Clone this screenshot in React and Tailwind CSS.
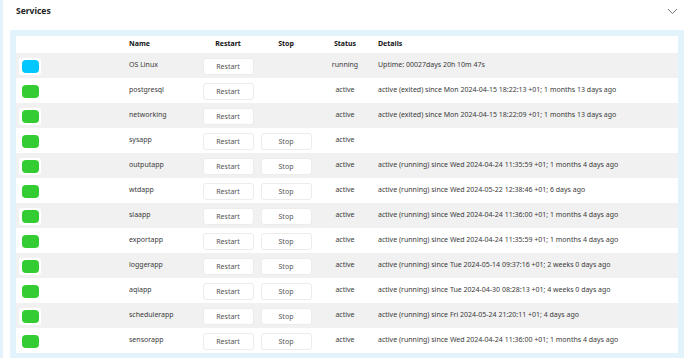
import React from "react";

const services = [
  { name: "OS Linux", color: "bg-[#00c8ff]", stop: false, status: "running", details: "Uptime: 00027days 20h 10m 47s" },
  { name: "postgresql", stop: false, status: "active", details: "active (exited) since Mon 2024-04-15 18:22:13 +01; 1 months 13 days ago" },
  { name: "networking", stop: false, status: "active", details: "active (exited) since Mon 2024-04-15 18:22:09 +01; 1 months 13 days ago" },
  { name: "sysapp", stop: true, status: "active", details: "" },
  { name: "outputapp", stop: true, status: "active", details: "active (running) since Wed 2024-04-24 11:35:59 +01; 1 months 4 days ago" },
  { name: "wtdapp", stop: true, status: "active", details: "active (running) since Wed 2024-05-22 12:38:46 +01; 6 days ago" },
  { name: "slaapp", stop: true, status: "active", details: "active (running) since Wed 2024-04-24 11:36:00 +01; 1 months 4 days ago" },
  { name: "exportapp", stop: true, status: "active", details: "active (running) since Wed 2024-04-24 11:35:59 +01; 1 months 4 days ago" },
  { name: "loggerapp", stop: true, status: "active", details: "active (running) since Tue 2024-05-14 09:37:16 +01; 2 weeks 0 days ago" },
  { name: "aqiapp", stop: true, status: "active", details: "active (running) since Tue 2024-04-30 08:28:13 +01; 4 weeks 0 days ago" },
  { name: "schedulerapp", stop: true, status: "active", details: "active (running) since Fri 2024-05-24 21:20:11 +01; 4 days ago" },
  { name: "sensorapp", stop: true, status: "active", details: "active (running) since Wed 2024-04-24 11:36:00 +01; 1 months 4 days ago" },
];

function SmallButton({ label }) {
  return (
    <button className="h-[17px] w-[51px] rounded-[3px] border border-[#ececec] bg-white text-[7px] leading-none text-[#555]">
      {label}
    </button>
  );
}

export default function App() {
  return (
    <div
      className="h-[358px] w-[688px] overflow-hidden border-l-[3px] border-[#e4f3fb] bg-white text-[#3a3a3a]"
      style={{ fontFamily: '"Noto Sans", "Open Sans", sans-serif' }}
    >
      {/* header */}
      <div className="flex h-[30px] items-start justify-between pl-[13px] pr-[10px] pt-[5px]">
        <span className="text-[8.5px] font-bold leading-[12px] text-[#222]">Services</span>
        <svg width="11" height="7" viewBox="0 0 11 7" className="mt-[3px]">
          <polyline points="1,1 5.5,5.5 10,1" fill="none" stroke="#777" strokeWidth="1" />
        </svg>
      </div>

      <div className="ml-[7px] mr-[4px] bg-[#e2f3fc] px-[6px] pt-[6px] pb-[5px]">
        <div className="bg-white">
          {/* column headings */}
          <div className="flex h-[17px] items-center text-[7px] font-bold text-[#111]">
            <div className="w-[113px]" />
            <div className="w-[71px]">Name</div>
            <div className="w-[56px] text-center">Restart</div>
            <div className="w-[60px] text-center">Stop</div>
            <div className="w-[58px] text-center">Status</div>
            <div className="pl-[4px]">Details</div>
          </div>

          {services.map((s, i) => (
            <div
              key={s.name}
              className={`flex h-[25px] items-start text-[7px] ${i % 2 === 0 ? "bg-[#f1f1f1]" : "bg-white"}`}
            >
              <div className="w-[113px] pl-[3px] pt-[5px]">
                <div className="flex h-[17px] w-[22px] items-center justify-center rounded-[3px] bg-white">
                  <div className={`h-[13px] w-[17px] rounded-[4px] ${s.color || "bg-[#33cc33]"}`} />
                </div>
              </div>
              <div className="w-[71px] pt-[6px] leading-[12px]">{s.name}</div>
              <div className="flex w-[56px] justify-center pt-[5px]">
                <SmallButton label="Restart" />
              </div>
              <div className="flex w-[60px] justify-center pt-[5px]">
                {s.stop && <SmallButton label="Stop" />}
              </div>
              <div className="w-[58px] pt-[6px] text-center leading-[12px]">{s.status}</div>
              <div className="pl-[4px] pt-[6px] leading-[12px] whitespace-nowrap">{s.details}</div>
            </div>
          ))}
        </div>
      </div>
    </div>
  );
}
